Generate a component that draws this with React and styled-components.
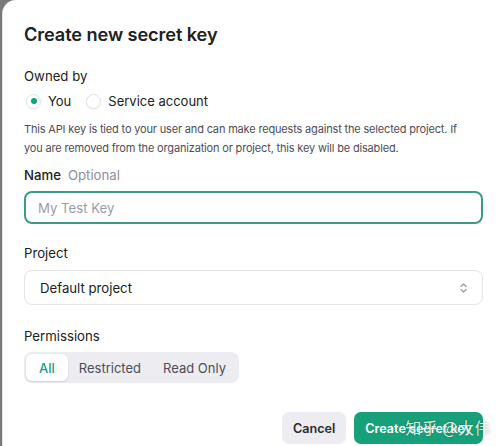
import React from "react";
import styled, { createGlobalStyle } from "styled-components";

const Global = createGlobalStyle`
  html, body {
    margin: 0;
    padding: 0;
    background: #7a7a7a;
    font-family: Inter, "Noto Sans", "Noto Sans CJK SC", sans-serif;
    color: #202123;
    overflow: hidden;
  }
`;

const Dialog = styled.div`
  position: relative;
  margin-left: 2px;
  width: 520px;
  height: 470px;
  box-sizing: border-box;
  background: #fff;
  border-left: 1px solid #e2e2e2;
  border-radius: 14px 14px 0 0;
  padding: 22px 0 0 21px;
`;

const Content = styled.div`
  width: 459px;
  display: flex;
  flex-direction: column;
`;

const Title = styled.h2`
  margin: 0 0 20px;
  font-size: 18.2px;
  font-weight: 600;
  letter-spacing: -0.1px;
  line-height: 24px;
`;

const Label = styled.div`
  font-size: 13.2px;
  font-weight: ${(p) => (p.$bold ? 500 : 400)};
  line-height: 20px;
  margin-bottom: ${(p) => p.$mb || 6}px;
  display: flex;
  gap: 7px;
`;

const Hint = styled.span`
  color: #8e8ea0;
  font-weight: 400;
`;

const RadioRow = styled.div`
  display: flex;
  align-items: center;
  gap: 15px;
  margin-bottom: 9px;
  padding-left: 2px;
`;

const RadioOption = styled.label`
  display: flex;
  align-items: center;
  gap: 7px;
  font-size: 13px;
  line-height: 20px;
`;

const Circle = styled.span`
  width: 13px;
  height: 13px;
  border-radius: 50%;
  border: 1px solid ${(p) => (p.$on ? "#d6ece4" : "#e0e0e6")};
  background: #fff;
  display: flex;
  align-items: center;
  justify-content: center;
  box-shadow: 0 1px 2px rgba(0, 0, 0, 0.06);
  &::after {
    content: "";
    width: 6px;
    height: 6px;
    border-radius: 50%;
    background: ${(p) => (p.$on ? "#10a37f" : "transparent")};
  }
`;

const Desc = styled.p`
  margin: 0 0 7px;
  font-size: 11px;
  letter-spacing: -0.17px;
  line-height: 19px;
  color: #4d4d56;
  white-space: nowrap;
`;

const Input = styled.input`
  box-sizing: border-box;
  width: 100%;
  height: 33px;
  border: 2px solid #3b9b86;
  border-radius: 8px;
  padding: 0 12px;
  font-family: inherit;
  font-size: 13.2px;
  outline: none;
  margin-bottom: 19px;
  &::placeholder {
    color: #9b9ba6;
  }
`;

const Select = styled.div`
  box-sizing: border-box;
  width: 100%;
  height: 35px;
  border: 1px solid #e3e3e8;
  border-radius: 8px;
  padding: 0 14px 0 15px;
  display: flex;
  align-items: center;
  justify-content: space-between;
  font-size: 13.2px;
  margin-bottom: 21px;
`;

const Segmented = styled.div`
  display: inline-flex;
  align-self: flex-start;
  background: #ececf1;
  border-radius: 8px;
  padding: 2px;
`;

const Segment = styled.div`
  height: 27px;
  padding: 0 ${(p) => (p.$active ? 13 : 11)}px;
  display: flex;
  align-items: center;
  font-size: 13px;
  border-radius: 6px;
  color: ${(p) => (p.$active ? "#10a37f" : "#4d4d56")};
  background: ${(p) => (p.$active ? "#fff" : "transparent")};
  box-shadow: ${(p) => (p.$active ? "0 1px 2px rgba(0,0,0,0.12)" : "none")};
  font-weight: ${(p) => (p.$active ? 500 : 400)};
`;

const Footer = styled.div`
  display: flex;
  justify-content: flex-end;
  gap: 8px;
  margin-top: 29px;
  position: relative;
`;

const Button = styled.button`
  height: 32px;
  border: none;
  border-radius: 7px;
  padding: 0 11px;
  font-family: inherit;
  font-size: 12.6px;
  font-weight: 600;
  color: ${(p) => (p.$primary ? "#fff" : "#2b2b33")};
  background: ${(p) => (p.$primary ? "#18a07a" : "#ececf1")};
`;

const Watermark = styled.span`
  position: absolute;
  right: -8px;
  top: 5px;
  font-family: "Noto Sans CJK SC", sans-serif;
  font-size: 16px;
  line-height: 20px;
  color: rgba(255, 255, 255, 0.85);
  text-shadow: 0 0 2px rgba(0, 0, 0, 0.35);
  letter-spacing: 0.5px;
  pointer-events: none;
`;

const Chevrons = () => (
  <svg width="9" height="12" viewBox="0 0 9 12" fill="none" stroke="#9b9ba6" strokeWidth="1.3" strokeLinecap="round" strokeLinejoin="round">
    <path d="M2 4.5 L4.5 2 L7 4.5" />
    <path d="M2 7.5 L4.5 10 L7 7.5" />
  </svg>
);

export default function App() {
  return (
    <>
      <Global />
      <Dialog>
        <Content>
          <Title>Create new secret key</Title>
          <Label $mb={5}>Owned by</Label>
          <RadioRow>
            <RadioOption>
              <Circle $on />
              You
            </RadioOption>
            <RadioOption>
              <Circle />
              Service account
            </RadioOption>
          </RadioRow>
          <Desc>
            This API key is tied to your user and can make requests against the selected project. If
            <br />
            you are removed from the organization or project, this key will be disabled.
          </Desc>
          <Label $bold>
            Name <Hint>Optional</Hint>
          </Label>
          <Input placeholder="My Test Key" />
          <Label $mb={7}>Project</Label>
          <Select>
            <span>Default project</span>
            <Chevrons />
          </Select>
          <Label $mb={6}>Permissions</Label>
          <Segmented>
            <Segment $active>All</Segment>
            <Segment>Restricted</Segment>
            <Segment>Read Only</Segment>
          </Segmented>
          <Footer>
            <Button>Cancel</Button>
            <Button $primary>Create secret key</Button>
            <Watermark>知乎 @大伟</Watermark>
          </Footer>
        </Content>
      </Dialog>
    </>
  );
}
